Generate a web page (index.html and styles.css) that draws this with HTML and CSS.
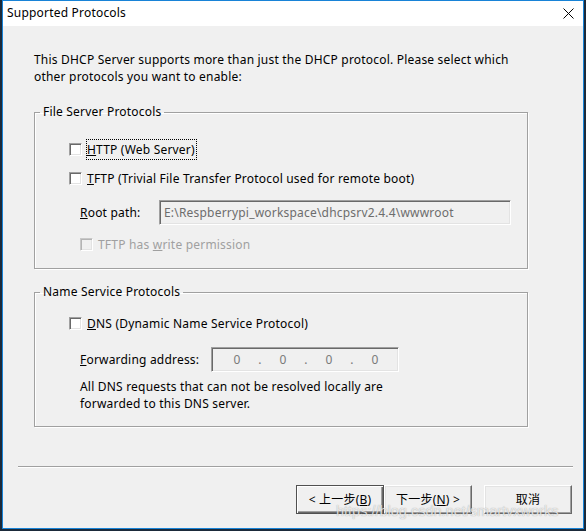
FILE: index.html
```html
<!DOCTYPE html>
<html>
<head>
<meta charset="utf-8">
<title>Supported Protocols</title>
<link rel="stylesheet" href="styles.css">
</head>
<body>
<div class="window">
  <div class="titlebar">
    <span class="title">Supported Protocols</span>
    <svg class="close" width="11" height="11" viewBox="0 0 11 11"><path d="M0.5 0.5 L10.5 10.5 M10.5 0.5 L0.5 10.5" stroke="#000" stroke-width="1" fill="none"/></svg>
  </div>
  <div class="content">
    <p class="intro">This DHCP Server supports more than just the DHCP protocol. Please select which<br>other protocols you want to enable:</p>

    <fieldset class="group g-file">
      <legend>File Server Protocols</legend>
      <div class="row r-http"><span class="cb"></span><span class="lbl focus"><u>H</u>TTP (Web Server)</span></div>
      <div class="row r-tftp"><span class="cb"></span><span class="lbl"><u>T</u>FTP (Trivial File Transfer Protocol used for remote boot)</span></div>
      <div class="row r-root"><span class="field-label w-root"><u>R</u>oot path:</span><div class="textbox tb-root">E:\Respberrypi_workspace\dhcpsrv2.4.4\wwwroot</div></div>
      <div class="row r-write disabled"><span class="cb cb-disabled"></span><span class="lbl">TFTP has <u>w</u>rite permission</span></div>
    </fieldset>

    <fieldset class="group g-name">
      <legend>Name Service Protocols</legend>
      <div class="row r-dns"><span class="cb"></span><span class="lbl"><u>D</u>NS (Dynamic Name Service Protocol)</span></div>
      <div class="row r-fwd"><span class="field-label w-fwd"><u>F</u>orwarding address:</span>
        <div class="textbox ipbox"><span class="oct">0</span><span class="dot">.</span><span class="oct">0</span><span class="dot">.</span><span class="oct">0</span><span class="dot">.</span><span class="oct">0</span></div>
      </div>
      <p class="desc">All DNS requests that can not be resolved locally are<br>forwarded to this DNS server.</p>
    </fieldset>

    <div class="separator"></div>

    <div class="buttons">
      <button class="btn btn-default">&lt; 上一步(<u>B</u>)</button>
      <button class="btn">下一步(<u>N</u>) &gt;</button>
      <button class="btn btn-cancel">取消</button>
    </div>
  </div>
  <div class="watermark">https://blog.csdn.net/smartvxworks</div>
</div>
</body>
</html>
```
FILE: styles.css
```css
html, body {
  margin: 0;
  padding: 0;
}
body {
  background: #1b2a3a;
  width: 586px;
  height: 531px;
  overflow: hidden;
  font-family: "Noto Sans", "Noto Sans CJK SC", sans-serif;
  font-size: 12px;
  letter-spacing: 0.2px;
  color: #000;
}
.window {
  position: relative;
  box-sizing: border-box;
  width: 582px;
  height: 529px;
  margin-left: 2px;
  border: 1px solid #1883d7;
  background: #f0f0f0;
  display: flex;
  flex-direction: column;
}
.titlebar {
  height: 25px;
  background: #fff;
  display: flex;
  align-items: flex-start;
  justify-content: space-between;
  flex: none;
}
.title {
  margin: 4px 0 0 4px;
  line-height: 16px;
}
.close {
  margin: 7px 9px 0 0;
  display: block;
}
.content {
  flex: 1;
  padding: 26px 0 0 12px;
}
.intro {
  margin: 0 0 0 19px;
  line-height: 16.5px;
}
.group {
  box-sizing: border-box;
  width: 494px;
  margin: 19px 0 0 19px;
  padding: 0;
  min-inline-size: 0;
  border: 1px solid #a0a0a0;
  box-shadow: 1px 1px 0 #fff, inset 1px 1px 0 #fff;
}
.group legend {
  padding: 0 3px;
  margin-left: 5px;
  line-height: 16px;
}
.g-file {
  padding-top: 20px;
  padding-bottom: 14px;
}
.g-name {
  margin-top: 15px;
  padding-top: 14px;
  padding-bottom: 14px;
}
.row {
  display: flex;
  align-items: center;
  height: 19px;
  margin-left: 34px;
}
.r-tftp { margin-top: 10px; }
.r-root {
  margin-top: 12px;
  margin-left: 45px;
  height: 25px;
}
.r-write {
  margin-top: 10px;
  margin-left: 45px;
}
.r-fwd {
  margin-top: 14px;
  margin-left: 45px;
  height: 25px;
}
.cb {
  box-sizing: border-box;
  width: 13px;
  height: 13px;
  flex: none;
  background: #fff;
  border: 1px solid;
  border-color: #a0a0a0 #fff #fff #a0a0a0;
  box-shadow: inset 1px 1px 0 #696969, inset -1px -1px 0 #e3e3e3;
}
.cb-disabled {
  background: #f0f0f0;
  border-color: #c8c8c8 #fff #fff #c8c8c8;
  box-shadow: inset 1px 1px 0 #b4b4b4, inset -1px -1px 0 #e3e3e3;
}
.lbl {
  margin-left: 4px;
  padding: 0 1px 0 0;
  border: 1px solid transparent;
  line-height: 19px;
}
.focus {
  border: 1px dotted #000;
}
.disabled .lbl {
  color: #a0a0a0;
  margin-left: 4px;
}
.field-label {
  flex: none;
  line-height: 16px;
}
.w-root { width: 79px; }
.w-fwd { width: 131px; }
.textbox {
  box-sizing: border-box;
  height: 25px;
  background: #f0f0f0;
  border: 1px solid;
  border-color: #a0a0a0 #fff #fff #a0a0a0;
  box-shadow: inset 1px 1px 0 #696969, inset -1px -1px 0 #e3e3e3;
  color: #6d6d6d;
  line-height: 23px;
  white-space: nowrap;
  overflow: hidden;
}
.tb-root {
  width: 352px;
  padding-left: 4px;
}
.ipbox {
  width: 188px;
  display: flex;
  padding-left: 10px;
  color: #7a7a7a;
}
.oct {
  width: 30px;
  text-align: center;
}
.dot {
  width: 16px;
  text-align: center;
}
.desc {
  margin: 6px 0 0 45px;
  line-height: 17px;
}
.separator {
  width: 555px;
  height: 1px;
  margin-top: 39px;
  margin-left: 3px;
  background: #a0a0a0;
  border-bottom: 1px solid #fff;
}
.buttons {
  display: flex;
  justify-content: flex-end;
  margin-top: 17px;
  margin-right: 11px;
}
.btn {
  box-sizing: border-box;
  width: 88px;
  height: 29px;
  padding: 0;
  margin: 0;
  font-family: "Noto Sans", "Noto Sans CJK SC", sans-serif;
  font-size: 12px;
  letter-spacing: 0.2px;
  color: #000;
  background: #f0f0f0;
  border: 1px solid;
  border-color: #fff #696969 #696969 #fff;
  box-shadow: inset -1px -1px 0 #a0a0a0, inset 1px 1px 0 #e3e3e3;
  line-height: 16px;
}
.btn-default {
  border: 1px solid #505050;
  box-shadow: inset 1px 1px 0 #fff, inset -1px -1px 0 #696969, inset -2px -2px 0 #a0a0a0;
}
.btn-cancel {
  margin-left: 12px;
}
.watermark {
  position: absolute;
  left: 333px;
  top: 502px;
  font-family: "Liberation Sans", Arial, sans-serif;
  font-size: 14.5px;
  letter-spacing: 0;
  color: rgba(255, 255, 255, 0.75);
  text-shadow: 0 0 1px rgba(90, 90, 90, 0.6);
  white-space: nowrap;
  pointer-events: none;
}
```
